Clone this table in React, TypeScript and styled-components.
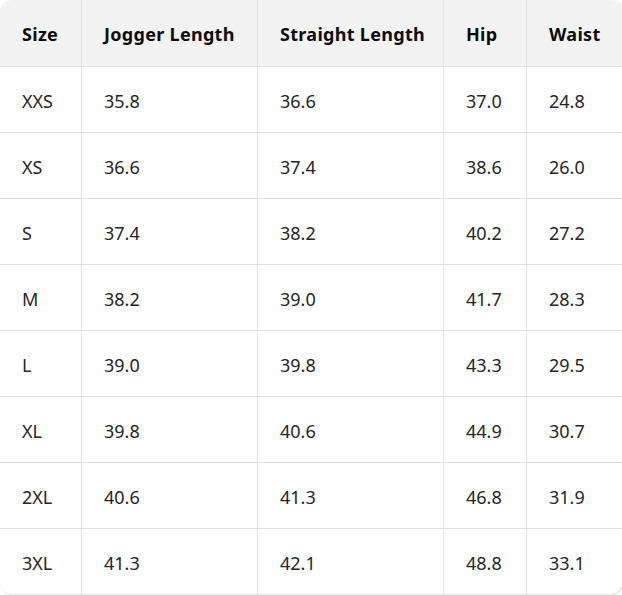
import React from "react";
import styled, { createGlobalStyle } from "styled-components";

const GlobalStyle = createGlobalStyle`
  html, body {
    margin: 0;
    padding: 0;
    background: #ffffff;
  }
  body {
    font-family: "Noto Sans", "Open Sans", sans-serif;
  }
`;

const columns = [
  { title: "Size", width: 82 },
  { title: "Jogger Length", width: 176 },
  { title: "Straight Length", width: 186 },
  { title: "Hip", width: 83 },
  { title: "Waist", width: 95 },
];

const rows = [
  ["XXS", "35.8", "36.6", "37.0", "24.8"],
  ["XS", "36.6", "37.4", "38.6", "26.0"],
  ["S", "37.4", "38.2", "40.2", "27.2"],
  ["M", "38.2", "39.0", "41.7", "28.3"],
  ["L", "39.0", "39.8", "43.3", "29.5"],
  ["XL", "39.8", "40.6", "44.9", "30.7"],
  ["2XL", "40.6", "41.3", "46.8", "31.9"],
  ["3XL", "41.3", "42.1", "48.8", "33.1"],
];

const App = () => (
  <>
    <GlobalStyle />
    <Wrapper>
      <SizeTable>
        <colgroup>
          {columns.map((c) => (
            <Col key={c.title} $width={c.width} />
          ))}
        </colgroup>
        <thead>
          <tr>
            {columns.map((c) => (
              <HeadCell key={c.title}>{c.title}</HeadCell>
            ))}
          </tr>
        </thead>
        <tbody>
          {rows.map((r) => (
            <tr key={r[0]}>
              {r.map((v, i) => (
                <Cell key={i}>{v}</Cell>
              ))}
            </tr>
          ))}
        </tbody>
      </SizeTable>
    </Wrapper>
  </>
);

export default App;

const Wrapper = styled.div`
  width: 622px;
`;

const SizeTable = styled.table`
  width: 622px;
  table-layout: fixed;
  border-collapse: separate;
  border-spacing: 0;
  border: 1px solid #e3e3e3;
  border-top: none;
  border-left: none;
  border-radius: 12px;
  overflow: hidden;
`;

const Col = styled.col<{ $width: number }>`
  width: ${(p) => p.$width}px;
`;

const HeadCell = styled.th`
  height: 64px;
  padding: 2px 0 0 22px;
  text-align: left;
  font-size: 18px;
  font-weight: 700;
  letter-spacing: 0.3px;
  color: #0d0d0d;
  background: #f2f2f2;
  border-bottom: 1px solid #e3e3e3;
  border-right: 1px solid #e3e3e3;
  white-space: nowrap;

  &:last-child {
    border-right: none;
  }
`;

const Cell = styled.td`
  height: 63px;
  padding: 2px 0 0 22px;
  text-align: left;
  font-size: 18px;
  font-weight: 400;
  color: #262626;
  border-bottom: 1px solid #e3e3e3;
  border-right: 1px solid #e3e3e3;
  white-space: nowrap;

  &:last-child {
    border-right: none;
  }

  tr:last-child > & {
    border-bottom: none;
  }
`;
